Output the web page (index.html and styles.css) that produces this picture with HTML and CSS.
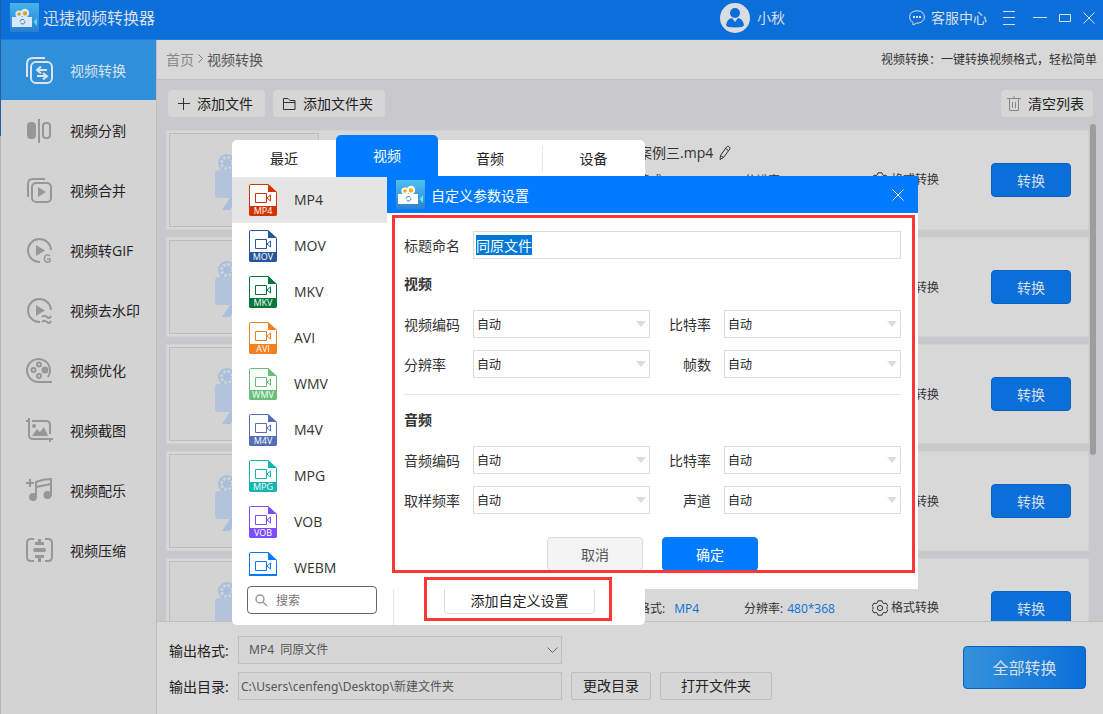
FILE: index.html
```html
<!DOCTYPE html>
<html lang="zh-CN">
<head>
<meta charset="utf-8">
<title>迅捷视频转换器</title>
<link rel="stylesheet" href="styles.css">
</head>
<body>
<svg class="sprites" aria-hidden="true">
  <defs>
    <linearGradient id="logo-bg" x1="0" y1="0" x2="0" y2="1"><stop offset="0" stop-color="#4fc0f0"/><stop offset="1" stop-color="#2f80cf"/></linearGradient>
  </defs>
  <symbol id="logo" viewBox="0 0 29 29">
    <rect width="29" height="29" fill="url(#logo-bg)"/>
    <circle cx="9" cy="11" r="3.6" fill="#fff"/><circle cx="15" cy="10" r="4.2" fill="#fff"/>
    <circle cx="9" cy="11" r="1.8" fill="#ffa800"/><circle cx="15" cy="10.400" r="2.100" fill="#ffa800"/>
    <path d="M2 14h20v10H2z" fill="#fff"/>
    <path d="M23.500 19l3.500-4v8z" fill="#5ff0dc"/>
    <path d="M10 18.500a2.500 2.500 0 0 1 4.500-1M15 18.500a2.500 2.500 0 0 1-4.500 1.500" fill="none" stroke="#2f80cf"/>
  </symbol>
  <symbol id="film-file" viewBox="0 0 28 32">
    <path d="M1.500.500H19l8.500 8V30q0 1.500-1.500 1.500H2Q.500 31.500.500 30V2Q.500.500 1.500.500z" fill="#fff" stroke="currentColor"/>
    <path d="M19 0l9 8h-9zM0 22h28v8q0 2-2 2H2q-2 0-2-2z" fill="currentColor"/>
    <path d="M6.500 9.500h11v9h-11zM18 14l3.500-3v6z" fill="none" stroke="currentColor"/>
  </symbol>
  <symbol id="gear" viewBox="0 0 16 16">
    <path d="M6 .800h4l.6 2 1.400.8 2-.5 2 3.300L14.500 8l1.500 1.600-2 3.300-2-.5-1.400.8-.6 2H6l-.6-2-1.400-.8-2 .5-2-3.300L1.500 8 0 6.400l2-3.300 2 .5 1.400-.8z" fill="none" stroke="currentColor" stroke-linejoin="round"/>
    <circle cx="8" cy="8" r="2.600" fill="none" stroke="currentColor"/>
  </symbol>
  <symbol id="camera" viewBox="0 0 84 60">
    <g fill="#a9bfdc"><circle cx="12" cy="13" r="9"/><path d="M15 48h8l-8 12H7zM46 48h-8l8 12h8z"/><circle cx="38" cy="11" r="10"/></g>
    <g fill="none" stroke="#d3d3d3" stroke-width="3" stroke-dasharray="2.500 1.800"><circle cx="12" cy="13" r="5.500"/><circle cx="38" cy="11" r="6"/></g>
    <rect y="20" width="60" height="28" rx="4" fill="#b2c3db"/><path d="M62 31l14-8v22l-14-8z" fill="#b2c3db"/>
  </symbol>
  <symbol id="pencil" viewBox="0 0 12 16">
    <path d="M1 14.500l.5-4L7.500 2q1-1.200 2.500-.3t.8 2.300L4.500 12.500zM6.500 3.500l3 2M1.500 10.500l3 2" fill="none" stroke="currentColor"/>
  </symbol>
</svg>

<div class="app">
  <header class="titlebar">
    <svg class="logo"><use href="#logo"/></svg>
    <h1 class="app-name">迅捷视频转换器</h1>
    <div class="user">
      <svg class="avatar" viewBox="0 0 30 30"><circle cx="15" cy="15" r="15" fill="#d9dde1"/><circle cx="15" cy="10" r="5" fill="#0b6fd9"/><path d="M6 22q1-6 6-7l3 4 3-4q5 1 6 7 0 2.500-9 2.500T6 22z" fill="#0b6fd9"/></svg>
      <span>小秋</span>
    </div>
    <div class="window-tools">
      <button class="tool support"><svg width="16" height="16" viewBox="0 0 16 16" fill="none" stroke="currentColor"><path d="M4 15v-2.500Q.600 10.800.600 7.200.800 1 8 .800q7.200.2 7.400 6.200Q15 13 7.500 13.200z"/><path d="M4 7h2M7 7h2M10 7h2" stroke-width="2"/></svg>客服中心</button>
      <button class="tool" aria-label="菜单"><svg width="12" height="14" viewBox="0 0 12 14" stroke="currentColor"><path d="M0 .500h12M0 6.500h12M0 13.500h12"/></svg></button>
      <button class="tool minimize" aria-label="最小化"><svg width="14" height="12" viewBox="0 0 14 12" stroke="currentColor"><path d="M0 5.500h14"/></svg></button>
      <button class="tool" aria-label="最大化"><svg width="12" height="12" viewBox="0 0 12 12" stroke="currentColor" fill="none"><path d="M.500 2.500h11v7H.500z"/></svg></button>
      <button class="tool" aria-label="关闭"><svg width="12" height="12" viewBox="0 0 12 12" stroke="currentColor"><path d="M.500.500l11 11M11.500.500l-11 11"/></svg></button>
    </div>
  </header>

  <div class="workspace">
    <nav class="sidebar">
      <a class="nav-item active" href="#"><svg viewBox="0 0 28 28"><path d="M1 20V7q0-6 6-6h12"/><rect x="5" y="5" width="21" height="21" rx="5"/><path d="M21 13h-9M15 9.500L11 13l4 3.500M11 19h9M17 16l4 3.200-4 3.200"/></svg>视频转换</a>
      <a class="nav-item" href="#"><svg viewBox="0 0 28 28"><rect x="2" y="6" width="7" height="15" rx="3" fill="currentColor"/><path d="M13 2v24"/><rect x="17" y="6" width="7" height="15" rx="3"/></svg>视频分割</a>
      <a class="nav-item" href="#"><svg viewBox="0 0 28 28"><path d="M2 20V7q0-5 5-5h12"/><rect x="6" y="6" width="19" height="19" rx="4"/><path class="solid" d="M12 10l8 5-8 5z"/></svg>视频合并</a>
      <a class="nav-item" href="#"><svg viewBox="0 0 28 28"><path d="M14 25A11.500 11.500 0 1 1 25 13"/><path class="solid" d="M10 8l9 5.500-9 5.500z"/><path d="M24 19q-2-2-4-.8-2 1.500-1.400 4.500 1 3 4 2.300l1.400-.7V22h-3" stroke-width="1.600"/></svg>视频转GIF</a>
      <a class="nav-item" href="#"><svg viewBox="0 0 28 28"><path d="M14 25A11.500 11.500 0 1 1 25 13"/><path class="solid" d="M10 8l9 5.500-9 5.500z"/><path d="M16 20q2.500-2.500 5 0t4-1M16 25q2.500-2.500 5 0t4-1"/></svg>视频去水印</a>
      <a class="nav-item" href="#"><svg viewBox="0 0 28 28"><path d="M26 25H13A11.500 11.500 0 1 1 22 20"/><circle cx="13" cy="7.500" r="2"/><circle cx="7.500" cy="13" r="2"/><circle cx="13" cy="19" r="2"/><circle cx="19" cy="13" r="2.500" fill="currentColor"/></svg>视频优化</a>
      <a class="nav-item" href="#"><svg viewBox="0 0 28 28"><path d="M0 4h2M3 1v17q0 4 4 4h20M6 4h14q4 0 4 4v9M24 21v4"/><path class="solid" d="M6 19l5-7 3 3 4-5 4 9z"/><circle class="solid" cx="8" cy="9" r="2"/></svg>视频截图</a>
      <a class="nav-item" href="#"><svg viewBox="0 0 28 28"><path d="M0 6h8M4 2v8M10 20V5q7-3 15-3v17M10 10l15-3"/><circle class="solid" cx="7" cy="20" r="4"/><circle class="solid" cx="21.500" cy="18" r="4"/></svg>视频配乐</a>
      <a class="nav-item" href="#"><svg viewBox="0 0 28 28"><path d="M8 2H5Q1 2 1 6v14q0 4 4 4h3M19 2h3q4 0 4 4v14q0 4-4 4h-3"/><path d="M9 13h9" stroke-width="4" stroke-linecap="round"/><path class="solid" d="M12 2h3v3h3v3H9V5h3zM12 25h3v-4h3v-3H9v3h3z"/></svg>视频压缩</a>
    </nav>

    <main class="main">
      <div class="crumbs">
        <div class="trail"><a href="#">首页</a><svg width="5" height="9" viewBox="0 0 5 9"><path d="M.500.500l4 4-4 4" fill="none" stroke="#777"/></svg><span>视频转换</span></div>
        <span class="tip">视频转换：一键转换视频格式，轻松简单</span>
      </div>
      <div class="toolbar">
        <button class="btn"><svg width="12" height="12" viewBox="0 0 12 12" stroke="#333"><path d="M5.500 0v12M0 5.500h12"/></svg>添加文件</button>
        <button class="btn folder"><svg width="13" height="12" viewBox="0 0 13 12" fill="none" stroke="#333"><path d="M.500 11.500V.500h4.500l2 2h5v9zM.500 4.500h11.500"/></svg>添加文件夹</button>
        <button class="btn clear"><svg width="14" height="15" viewBox="0 0 14 15" fill="none" stroke="#888"><path d="M0 2.500h14M7 0v2M2.500 3v11.500h9V3M5.500 6v6M8.500 6v6"/></svg>清空列表</button>
      </div>
      <div class="list-area">
        <ul class="cards">
          <li class="card"><div class="thumb"><svg><use href="#camera"/></svg></div><div class="info"><p class="name">案例三.mp4<svg><use href="#pencil"/></svg></p><div class="meta"><span class="type">格式:</span><span class="size">分辨率:</span><button class="format"><svg><use href="#gear"/></svg>格式转换</button></div></div><button class="convert">转换</button></li>
          <li class="card"><div class="thumb"><svg><use href="#camera"/></svg></div><div class="info"><div class="meta"><button class="format"><svg><use href="#gear"/></svg>格式转换</button></div></div><button class="convert">转换</button></li>
          <li class="card"><div class="thumb"><svg><use href="#camera"/></svg></div><div class="info"><div class="meta"><button class="format"><svg><use href="#gear"/></svg>格式转换</button></div></div><button class="convert">转换</button></li>
          <li class="card"><div class="thumb"><svg><use href="#camera"/></svg></div><div class="info"><div class="meta"><button class="format"><svg><use href="#gear"/></svg>格式转换</button></div></div><button class="convert">转换</button></li>
          <li class="card"><div class="thumb"><svg><use href="#camera"/></svg></div><div class="info"><div class="meta"><span class="type">格式:<b>MP4</b></span><span class="size">分辨率:<b>480*368</b></span><button class="format"><svg><use href="#gear"/></svg>格式转换</button></div></div><button class="convert">转换</button></li>
        </ul>
        <div class="scroll-thumb"></div>
      </div>
      <footer class="output">
        <div class="output-rows">
          <div class="output-row">
            <label for="out-format">输出格式:</label>
            <div class="out-select"><select id="out-format" class="out-field"><option>MP4&nbsp; 同原文件</option></select><svg width="11" height="7" viewBox="0 0 11 7"><path d="M.500.500l5 5 5-5" fill="none" stroke="#666"/></svg></div>
          </div>
          <div class="output-row">
            <label for="out-dir">输出目录:</label>
            <input id="out-dir" class="out-field path" type="text" value="C:\Users\cenfeng\Desktop\新建文件夹">
            <button class="out-btn">更改目录</button>
            <button class="out-btn wide">打开文件夹</button>
          </div>
        </div>
        <button class="convert-all">全部转换</button>
      </footer>
    </main>
  </div>

  <section class="popup" aria-label="格式选择">
    <div class="tabs">
      <button class="tab">最近</button><button class="tab current">视频</button><button class="tab">音频</button><button class="tab split">设备</button>
    </div>
    <ul class="formats">
      <li class="fmt mp4 chosen"><span class="file"><svg><use href="#film-file"/></svg><i>MP4</i></span>MP4</li>
      <li class="fmt mov"><span class="file"><svg><use href="#film-file"/></svg><i>MOV</i></span>MOV</li>
      <li class="fmt mkv"><span class="file"><svg><use href="#film-file"/></svg><i>MKV</i></span>MKV</li>
      <li class="fmt avi"><span class="file"><svg><use href="#film-file"/></svg><i>AVI</i></span>AVI</li>
      <li class="fmt wmv"><span class="file"><svg><use href="#film-file"/></svg><i>WMV</i></span>WMV</li>
      <li class="fmt m4v"><span class="file"><svg><use href="#film-file"/></svg><i>M4V</i></span>M4V</li>
      <li class="fmt mpg"><span class="file"><svg><use href="#film-file"/></svg><i>MPG</i></span>MPG</li>
      <li class="fmt vob"><span class="file"><svg><use href="#film-file"/></svg><i>VOB</i></span>VOB</li>
      <li class="fmt webm"><span class="file"><svg><use href="#film-file"/></svg></span>WEBM</li>
    </ul>
    <div class="popup-foot">
      <label class="search"><svg width="13" height="13" viewBox="0 0 13 13" fill="none" stroke="#999" stroke-width="1.500"><circle cx="5" cy="5" r="4"/><path d="M8 8l4 4"/></svg><input type="text" placeholder="搜索" aria-label="搜索"></label>
      <div class="custom-wrap"><button class="custom">添加自定义设置</button></div>
    </div>
  </section>

  <section class="dialog" role="dialog" aria-labelledby="dlg-title">
    <header class="dialog-head">
      <svg class="logo"><use href="#logo"/></svg>
      <h2 id="dlg-title">自定义参数设置</h2>
      <button class="close" aria-label="关闭"><svg width="12" height="12" viewBox="0 0 12 12" stroke="#fff"><path d="M.500.500l11 11M11.500.500l-11 11"/></svg></button>
    </header>
    <form class="dialog-body">
      <div class="fields">
        <label for="title">标题命名</label><input id="title" class="field full" type="text" value="同原文件">
      </div>
      <h3>视频</h3>
      <div class="fields">
        <label for="vcodec">视频编码</label><div class="pick"><select id="vcodec" class="field"><option>自动</option></select></div>
        <label class="right" for="vrate">比特率</label><div class="pick"><select id="vrate" class="field"><option>自动</option></select></div>
        <label for="res">分辨率</label><div class="pick"><select id="res" class="field"><option>自动</option></select></div>
        <label class="right" for="fps">帧数</label><div class="pick"><select id="fps" class="field"><option>自动</option></select></div>
      </div>
      <hr>
      <h3>音频</h3>
      <div class="fields">
        <label for="acodec">音频编码</label><div class="pick"><select id="acodec" class="field"><option>自动</option></select></div>
        <label class="right" for="arate">比特率</label><div class="pick"><select id="arate" class="field"><option>自动</option></select></div>
        <label for="sample">取样频率</label><div class="pick"><select id="sample" class="field"><option>自动</option></select></div>
        <label class="right" for="channel">声道</label><div class="pick"><select id="channel" class="field"><option>自动</option></select></div>
      </div>
      <div class="actions"><button type="button" class="action">取消</button><button type="button" class="action ok">确定</button></div>
    </form>
  </section>

  <div class="mark mark-form"></div>
  <div class="mark mark-custom"></div>
</div>
<script src="main.js"></script>
</body>
</html>
```

FILE: main.js
```js
const titleInput = document.getElementById("title");
titleInput.focus();
titleInput.select();
```

FILE: styles.css
```css
* { box-sizing: border-box; margin: 0; padding: 0; }
body, button, input, select {
  font: 14px/20px "Open Sans", "Noto Sans CJK SC", sans-serif;
  color: #222;
}
button { border: 0; background: none; cursor: pointer; }
input, select { outline: 0; border-radius: 0; }
select { appearance: none; }
ul { list-style: none; }
svg { display: block; flex: none; }
a { color: inherit; text-decoration: none; }
b, i { font-weight: 400; font-style: normal; }
.sprites { position: absolute; width: 0; height: 0; }

.app {
  position: relative;
  height: 100vh;
  display: flex;
  flex-direction: column;
  padding-left: 1px;
  overflow: hidden;
  background: linear-gradient(#24609f 136px, #b4b4b4 136px);
}

/* Title bar */
.titlebar {
  flex: none;
  display: flex;
  height: 40px;
  padding: 0 8px 4px 9px;
  align-items: center;
  background: #0b6fd9;
  border-bottom: 1px solid #1a7ee0;
  color: #d9dfe6;
}
.logo { width: 29px; height: 29px; }
.titlebar .logo { opacity: .85; }
.app-name { flex: 1; margin-left: 4px; font-size: 16px; font-weight: 400; }
.user { display: flex; align-items: center; gap: 7px; }
.avatar { width: 30px; height: 30px; }
.window-tools { flex: none; width: 310px; display: flex; justify-content: flex-end; align-items: center; gap: 12px; }
.tool { display: flex; align-items: center; color: inherit; }
.support { gap: 6px; margin-right: 4px; }
.minimize { margin-left: 6px; }

.workspace { flex: 1; min-height: 0; display: flex; }

/* Sidebar */
.sidebar { flex: none; width: 156px; background: #d3d3d3; border-right: 1px solid #bcbcbc; }
.nav-item { display: flex; align-items: center; gap: 16px; height: 60px; padding: 2px 0 0 25px; }
.nav-item svg { width: 28px; height: 28px; fill: none; stroke: #979797; stroke-width: 2; color: #979797; }
.nav-item .solid { fill: currentColor; stroke: none; }
.nav-item.active { background: #308fd9; color: #d9e3ec; }
.nav-item.active svg { stroke: #dde3e8; }

/* Main column */
.main { flex: 1; min-width: 0; display: flex; flex-direction: column; background: #c9c9cb; }
.crumbs {
  flex: none;
  display: flex;
  align-items: center;
  justify-content: space-between;
  height: 40px;
  padding: 0 6px 0 9px;
  background: #d8d8d8;
  border-bottom: 1px solid #bfbfbf;
}
.trail { display: flex; align-items: center; gap: 4px; color: #555; }
.trail a { color: #888; }
.trail svg { margin-bottom: 3px; }
.tip { font-size: 12px; color: #333; }
.toolbar { flex: none; display: flex; align-items: flex-end; gap: 8px; height: 37px; padding: 0 10px 0 11px; }
.btn {
  display: flex;
  align-items: center;
  gap: 7px;
  height: 27px;
  padding: 0 12px 0 10px;
  border-radius: 4px;
  background: #d6d6d6;
}
.btn.clear { margin-left: auto; gap: 7px; padding: 0 9px 0 6px; }

.list-area { flex: 1; min-height: 0; display: flex; align-items: flex-start; padding: 7px 7px 0 9px; overflow: hidden; }
.cards { flex: 1; display: flex; flex-direction: column; gap: 7px; padding-top: 6px; }
.card {
  display: flex;
  align-items: center;
  height: 100px;
  padding: 0 17px 0 2px;
  background: #d8d8d8;
  border: 1px solid #d2d2d3;
}
.thumb {
  flex: none;
  display: flex;
  align-items: center;
  width: 150px;
  height: 94px;
  padding-left: 45px;
  background: #d3d3d3;
  border: 1px solid #bdbdbd;
}
.thumb svg { width: 84px; height: 60px; }
.info { flex: 1; align-self: stretch; display: flex; flex-direction: column; margin-left: 319px; padding: 12px 0 38px; }
.name { display: flex; align-items: center; gap: 6px; color: #333; }
.name svg { width: 12px; height: 16px; }
.meta {
  display: grid;
  grid-template-columns: 106px 128px auto;
  justify-content: start;
  align-items: center;
  margin-top: auto;
  font-size: 12px;
  color: #333;
}
.meta span { display: flex; padding-top: 3px; }
.meta .type { gap: 9px; }
.meta .size { gap: 4px; }
.meta b { color: #0b6fd9; }
.format { grid-column: 3; display: flex; align-items: center; gap: 3px; font-size: 12px; color: #333; }
.format svg { width: 16px; height: 16px; overflow: visible; }
.convert { flex: none; width: 80px; height: 34px; padding-top: 2px; border: 1px solid #0a62c0; border-radius: 4px; background: #0b6fd9; color: #d9dfe6; }
.scroll-thumb { flex: none; width: 6px; height: 331px; margin-left: 1px; border-radius: 3px; background: #9d9d9d; }

/* Output bar */
.output {
  flex: none;
  display: flex;
  align-items: flex-start;
  justify-content: space-between;
  padding: 14px 17px 14px 12px;
  background: #d8d8d8;
  border-top: 1px solid #bfbfbf;
}
.output-rows { display: grid; gap: 8px; }
.output-row { display: flex; align-items: center; }
.output-row label { width: 69px; padding-top: 2px; }
.out-select { display: flex; align-items: center; }
.out-select svg { margin-left: -15px; }
.out-field { width: 324px; height: 28px; padding: 0 10px; border: 1px solid #bdbdbd; background: #d6d6d6; font-family: "Noto Sans", "Noto Sans CJK SC", sans-serif; font-size: 12px; color: #555; }
.out-field.path { padding: 0 2px; }
.out-btn { width: 80px; height: 28px; margin-left: 9px; border: 1px solid #bdbdbd; border-radius: 2px; background: #d6d6d6; }
.out-btn.wide { width: 112px; }
.convert-all {
  width: 123px;
  height: 43px;
  margin-top: 10px;
  border: 1px solid #0a62c0;
  border-radius: 4px;
  background: linear-gradient(90deg, #3592da, #0b6fd9);
  font-size: 16px;
  color: #d9dfe6;
}

/* Format popup */
.popup { position: absolute; left: 232px; top: 140px; width: 413px; border-radius: 5px; background: #fff; }
.tabs { display: grid; grid-template-columns: 104px 102px 104px 103px; height: 37px; }
.tab { height: 37px; }
.tab.current { height: 42px; margin-top: -5px; border-radius: 5px 5px 0 0; background: #007bff; color: #fff; }
.tab.split { background: linear-gradient(#e6e6e6, #e6e6e6) 0 6px / 1px 26px no-repeat; }
.formats { width: 155px; height: 399px; overflow: hidden; }
.fmt { display: flex; align-items: center; gap: 17px; height: 46px; padding-left: 17px; color: #333; }
.fmt.chosen { background: #e5e5e5; }
.file { position: relative; width: 28px; height: 32px; }
.file svg { width: 28px; height: 32px; }
.file i { position: absolute; left: 0; right: 0; bottom: 0; font-size: 9px; line-height: 10px; text-align: center; color: #fff; }
.mp4 svg { color: #d03400; }
.mov svg { color: #27549b; }
.mkv svg { color: #00763b; }
.avi svg { color: #f0811e; }
.wmv svg { color: #68bd78; }
.m4v svg { color: #536db6; }
.mpg svg { color: #13b5b1; }
.vob svg { color: #7c4dff; }
.webm svg { color: #007bff; }
.popup-foot { display: flex; height: 49px; padding-left: 15px; }
.search { display: flex; align-items: center; gap: 8px; width: 130px; height: 28px; margin-top: 10px; padding: 0 7px; border: 1px solid #666; border-radius: 4px; }
.search input { width: 90px; padding-top: 2px; border: 0; font-size: 12px; }
.search input::placeholder { color: #777; }
.custom-wrap { flex: 1; margin-left: 16px; padding: 9px 0 0 50px; border-left: 1px solid #e6e6e6; }
.custom { width: 151px; height: 29px; padding-top: 2px; border: 1px solid #dcdcdc; border-radius: 4px; }

/* Custom settings dialog */
.dialog { position: absolute; left: 387px; top: 176px; width: 531px; height: 413px; background: #fff; }
.dialog-head { display: flex; align-items: center; height: 37px; padding: 0 14px 0 9px; background: #007bff; color: #fff; }
.dialog-head h2 { flex: 1; margin-left: 6px; padding-top: 2px; font-size: 14px; font-weight: 400; }
.dialog-body { padding: 18px 17px; }
.dialog-body h3 { padding: 15px 0 16px; font-size: 14px; font-weight: 700; color: #333; }
.dialog-body hr { margin-top: 16px; border: 0; border-top: 1px solid #e6e6e6; }
.fields { display: grid; grid-template-columns: 69px 1fr 74px 1fr; gap: 12px 0; align-items: center; }
.fields label { padding-top: 2px; color: #333; }
.fields .right { padding-right: 13px; text-align: right; }
.field { display: block; width: 100%; height: 28px; padding: 2px 3px 0; border: 1px solid #dcdcdc; background: #fff; font-size: 12px; }
.field.full { grid-column: 2 / -1; padding: 0 2px; font-size: 14px; }
.field.full::selection { background: #0078d7; color: #fff; }
.pick { position: relative; }
.pick::after { content: ""; position: absolute; right: 4px; top: 11px; border: 5px solid transparent; border-top: 6px solid #dcdcdc; border-bottom: 0; pointer-events: none; }
.actions { display: flex; justify-content: center; gap: 19px; margin-top: 23px; }
.action { width: 96px; height: 34px; padding-top: 2px; border: 1px solid #dcdcdc; border-radius: 4px; background: #f4f4f4; color: #555; }
.action.ok { border-color: #007bff; background: #007bff; color: #fff; }

/* Highlight frames */
.mark { position: absolute; border: 3px solid #ff3636; pointer-events: none; }
.mark-form { left: 392px; top: 215px; width: 523px; height: 358px; }
.mark-custom { left: 424px; top: 577px; width: 188px; height: 44px; }
```
